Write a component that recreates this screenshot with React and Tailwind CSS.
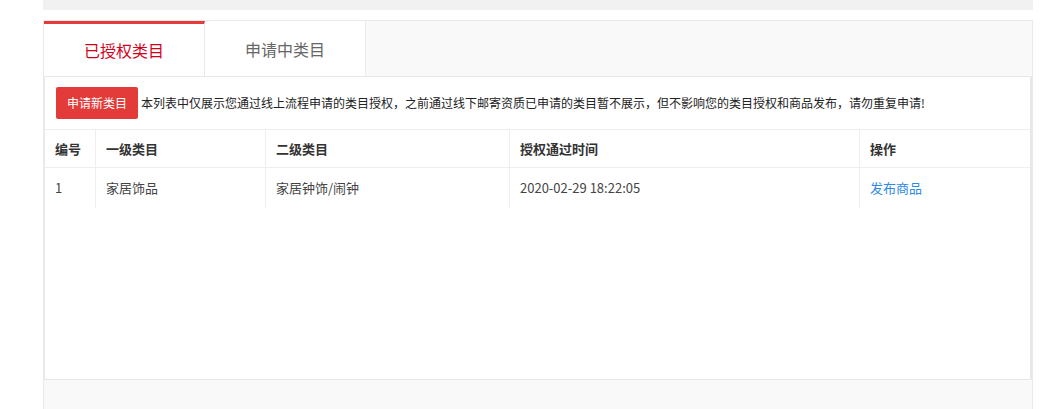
export default function App() {
  const font = { fontFamily: '"Noto Sans CJK SC", "Noto Sans", sans-serif' };
  return (
    <div className="w-[1057px] h-[409px] bg-white overflow-hidden" style={font}>
      <div className="ml-[43px] w-[990px] h-[10px] bg-[#f1f1f1]" />
      <div className="ml-[43px] mt-[10px] w-[990px] h-[389px] border-t border-l border-r border-[#eaeaea] bg-[#f9f9f9] flex flex-col">
        <div className="flex h-[55px]">
          <div className="w-[161px] h-[55px] bg-white border-t-[3px] border-[#e43a3b] border-r border-r-[#eaeaea] flex items-center justify-center text-[16px] text-[#d0021b]">
            已授权类目
          </div>
          <div className="w-[161px] h-[55px] bg-white border-r border-[#eaeaea] flex items-center justify-center text-[16px] text-[#666]">
            申请中类目
          </div>
        </div>
        <div className="h-[304px] bg-white border-t border-l border-r-2 border-[#e8e8e8] flex flex-col">
          <div className="h-[53px] flex items-center pl-[11px] border-b border-[#eeeeee]">
            <div className="w-[82px] h-[32px] bg-[#e33a3a] rounded-[2px] text-white text-[12px] flex items-center justify-center">
              申请新类目
            </div>
            <div className="ml-[3px] text-[12px] text-[#222] whitespace-nowrap">
              本列表中仅展示您通过线上流程申请的类目授权，之前通过线下邮寄资质已申请的类目暂不展示，但不影响您的类目授权和商品发布，请勿重复申请!
            </div>
          </div>
          <div className="flex h-[38px] border-b border-[#eeeeee] text-[13px] font-bold text-[#333]">
            <div className="w-[51px] pl-[10px] flex items-center border-r border-[#eeeeee]">编号</div>
            <div className="w-[170px] pl-[10px] flex items-center border-r border-[#eeeeee]">一级类目</div>
            <div className="w-[244px] pl-[10px] flex items-center border-r border-[#eeeeee]">二级类目</div>
            <div className="w-[350px] pl-[10px] flex items-center border-r border-[#eeeeee]">授权通过时间</div>
            <div className="flex-1 pl-[10px] flex items-center">操作</div>
          </div>
          <div className="flex h-[40px] text-[13px] text-[#444]">
            <div className="w-[51px] pl-[10px] flex items-center border-r border-[#eeeeee]">1</div>
            <div className="w-[170px] pl-[10px] flex items-center border-r border-[#eeeeee]">家居饰品</div>
            <div className="w-[244px] pl-[10px] flex items-center border-r border-[#eeeeee]">家居钟饰/闹钟</div>
            <div className="w-[350px] pl-[10px] flex items-center border-r border-[#eeeeee]">2020-02-29 18:22:05</div>
            <div className="flex-1 pl-[10px] flex items-center text-[#2f8ae6]">发布商品</div>
          </div>
          <div className="flex-1" />
          <div className="h-px bg-[#e8e8e8]" />
        </div>
        <div className="flex-1 mx-[1px] bg-[#f9f9f9]" />
      </div>
    </div>
  );
}
